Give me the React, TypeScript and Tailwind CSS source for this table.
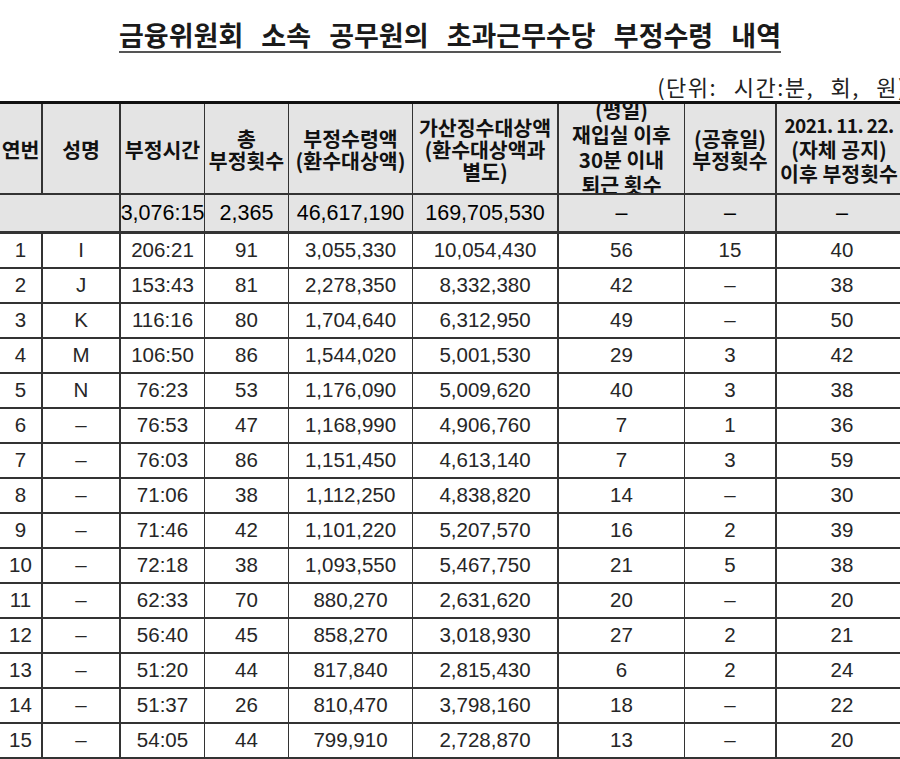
import React from 'react'

const rows: string[][] = [
  ['1', 'I', '206:21', '91', '3,055,330', '10,054,430', '56', '15', '40'],
  ['2', 'J', '153:43', '81', '2,278,350', '8,332,380', '42', '–', '38'],
  ['3', 'K', '116:16', '80', '1,704,640', '6,312,950', '49', '–', '50'],
  ['4', 'M', '106:50', '86', '1,544,020', '5,001,530', '29', '3', '42'],
  ['5', 'N', '76:23', '53', '1,176,090', '5,009,620', '40', '3', '38'],
  ['6', '–', '76:53', '47', '1,168,990', '4,906,760', '7', '1', '36'],
  ['7', '–', '76:03', '86', '1,151,450', '4,613,140', '7', '3', '59'],
  ['8', '–', '71:06', '38', '1,112,250', '4,838,820', '14', '–', '30'],
  ['9', '–', '71:46', '42', '1,101,220', '5,207,570', '16', '2', '39'],
  ['10', '–', '72:18', '38', '1,093,550', '5,467,750', '21', '5', '38'],
  ['11', '–', '62:33', '70', '880,270', '2,631,620', '20', '–', '20'],
  ['12', '–', '56:40', '45', '858,270', '3,018,930', '27', '2', '21'],
  ['13', '–', '51:20', '44', '817,840', '2,815,430', '6', '2', '24'],
  ['14', '–', '51:37', '26', '810,470', '3,798,160', '18', '–', '22'],
  ['15', '–', '54:05', '44', '799,910', '2,728,870', '13', '–', '20'],
  ['', '', '', '', '', '', '', '', ''],
]

// right border per column: thicker lines after 연번, 성명, 가산징수, 공휴일
const colBorder = [
  'border-r-2',
  'border-r-2',
  'border-r',
  'border-r',
  'border-r',
  'border-r-2',
  'border-r',
  'border-r-2',
  'border-r-0',
]

const kr = "font-['Noto_Sans_CJK_KR','Noto_Sans',sans-serif]"
const num = "font-['Liberation_Sans','Noto_Sans_CJK_KR',sans-serif]"

function HeadCell({
  lines,
  idx,
  lh = 'leading-[22px]',
  extra = '',
}: {
  lines: React.ReactNode[]
  idx: number
  lh?: string
  extra?: string
}) {
  return (
    <div
      className={`${colBorder[idx]} border-b-2 border-[#333] bg-[#e4e4e4] h-[91px] overflow-hidden flex flex-col items-center justify-center text-center ${kr} font-bold text-[20.5px] text-[#111] ${lh} ${extra} whitespace-nowrap`}
    >
      {lines.map((l, i) => (
        <span key={i}>{l}</span>
      ))}
    </div>
  )
}

export default function App() {
  return (
    <div className="w-[900px] h-[759px] overflow-hidden bg-white">
      <div className={`pt-[19px] h-[51px] text-center ${kr} font-bold text-[27px] leading-[32px] text-[#1a1a1a] [word-spacing:12px]`}>
        <span className="underline decoration-2 decoration-[#555] underline-offset-[5px]">
          금융위원회 소속 공무원의 초과근무수당 부정수령 내역
        </span>
      </div>

      <div className={`mt-[23px] h-[24px] flex justify-end mr-[-7px] ${kr} text-[22px] leading-[24px] text-[#222] tracking-[1.5px] [word-spacing:10px] whitespace-nowrap`}>
        (단위: 시간:분, 회, 원)
      </div>

      <div className="mt-[3px] w-[907px] border-t-[3px] border-[#111] grid grid-cols-[43px_78px_84px_84px_124px_146px_126px_92px_130px]">
        <HeadCell idx={0} lines={['연번']} />
        <HeadCell idx={1} lines={['성명']} />
        <HeadCell idx={2} lines={['부정시간']} />
        <HeadCell idx={3} lines={['총', '부정횟수']} />
        <HeadCell idx={4} lines={['부정수령액', '(환수대상액)']} />
        <HeadCell idx={5} lines={['가산징수대상액', '(환수대상액과', '별도)']} />
        <HeadCell
          idx={6}
          lines={['(평일)', '재입실 이후', '30분 이내', '퇴근 횟수']}
          lh="leading-[25px]"
          extra="pb-[4px]"
        />
        <HeadCell idx={7} lines={['(공휴일)', '부정횟수']} />
        <HeadCell
          idx={8}
          lines={[
            <span className="text-[19px] tracking-[-0.6px] font-semibold">2021. 11. 22.</span>,
            '(자체 공지)',
            '이후 부정횟수',
          ]}
          lh="leading-[24px]"
          extra="pr-[6px]"
        />

        {/* 합계 */}
        <div className="col-span-2 border-r-2 border-b-[3px] border-[#333] bg-[#e4e4e4] h-[39px]" />
        {['3,076:15', '2,365', '46,617,190', '169,705,530', '–', '–', '–'].map((v, i) => (
          <div
            key={i}
            className={`${colBorder[i + 2]} border-b-[3px] border-[#333] bg-[#e4e4e4] h-[39px] flex items-center justify-center ${num} text-[21.5px] text-black whitespace-nowrap`}
          >
            {v}
          </div>
        ))}

        {rows.map((r, ri) =>
          r.map((v, ci) => (
            <div
              key={`${ri}-${ci}`}
              className={`${colBorder[ci]} border-b-2 border-[#333] h-[35px] flex items-center justify-center ${num} text-[20.5px] text-[#262626]`}
            >
              {v}
            </div>
          ))
        )}
      </div>
    </div>
  )
}
